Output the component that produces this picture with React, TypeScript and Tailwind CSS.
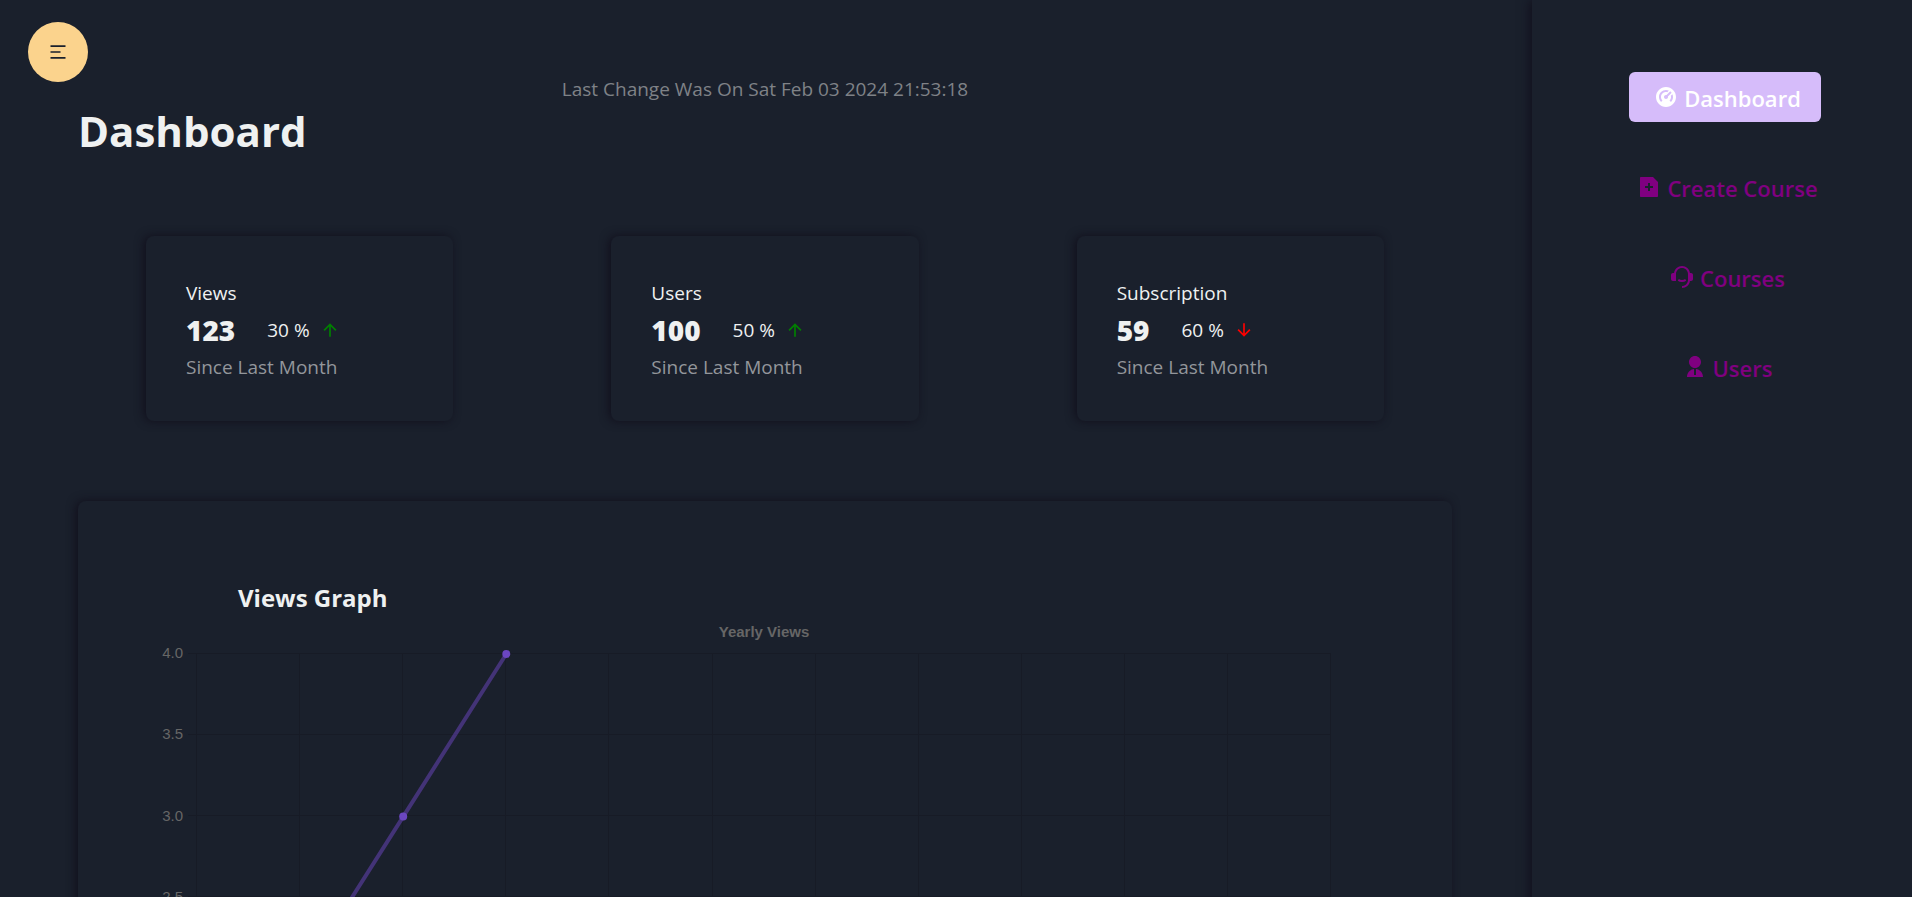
import { RiMenu2Line, RiArrowUpLine, RiArrowDownLine, RiDashboard2Fill, RiFileAddFill, RiCustomerService2Fill, RiUser2Fill } from "react-icons/ri";
import type { IconType } from "react-icons";

type Stat = { title: string; value: number; percent: number; up: boolean };

const stats: Stat[] = [
  { title: "Views", value: 123, percent: 30, up: true },
  { title: "Users", value: 100, percent: 50, up: true },
  { title: "Subscription", value: 59, percent: 60, up: false },
];

const links: { label: string; icon: IconType; active?: boolean }[] = [
  { label: "Dashboard", icon: RiDashboard2Fill, active: true },
  { label: "Create Course", icon: RiFileAddFill },
  { label: "Courses", icon: RiCustomerService2Fill },
  { label: "Users", icon: RiUser2Fill },
];

function StatCard({ title, value, percent, up }: Stat) {
  return (
    <section className="flex-1 rounded-lg px-10 pt-[41px] pb-[38px] shadow-[-2px_0_10px_#110f1c]">
      <p className="text-[19px] leading-8 text-[#eff1f1]">{title}</p>
      <div className="my-[3px] flex h-9 items-center">
        <strong className="text-[28px] leading-9 font-extrabold">{value}</strong>
        <span className="ml-8 text-[19px] leading-9">{percent} %</span>
        {up ? (
          <RiArrowUpLine className="ml-2.5 size-5 text-[#008000]" />
        ) : (
          <RiArrowDownLine className="ml-2.5 size-5 text-[#ff0000]" />
        )}
      </div>
      <p className="text-[19px] leading-8 text-[#93969b]">Since Last Month</p>
    </section>
  );
}

const STEP_X = 103.1;
const STEP_Y = 81.3;
const LEFT = 36;
const TOP = 34;
const COLS = 12;
const ticks = ["4.0", "3.5", "3.0", "2.5", "2.0", "1.5", "1.0", "0.5", "0"];
const views = [1, 2, 3, 4];

function ViewsChart() {
  const right = LEFT + STEP_X * (COLS - 1);
  const bottom = TOP + STEP_Y * (ticks.length - 1);
  const points = views.map((v, i) => [LEFT + i * STEP_X, TOP + (4 - v) * 2 * STEP_Y]);
  return (
    <svg viewBox="0 0 1170 712" className="block w-full" role="img" aria-label="Yearly Views">
      <text x={(LEFT + right) / 2} y="17" textAnchor="middle" fill="#666666" className="text-[15px] font-bold">
        Yearly Views
      </text>
      <g stroke="#171b26" strokeWidth="1">
        {ticks.map((t, i) => (
          <line key={t} x1={LEFT - 9} x2={right} y1={Math.floor(TOP + i * STEP_Y) - 0.5} y2={Math.floor(TOP + i * STEP_Y) - 0.5} />
        ))}
        {Array.from({ length: COLS }, (_, i) => (
          <line key={i} x1={Math.round(LEFT + i * STEP_X) - 0.5} x2={Math.round(LEFT + i * STEP_X) - 0.5} y1={TOP} y2={bottom + 8} />
        ))}
      </g>
      {ticks.map((t, i) => (
        <text key={t} x={LEFT - 14} y={TOP + i * STEP_Y + 4} textAnchor="end" fill="#666666" className="text-[15px]">
          {t}
        </text>
      ))}
      <polyline points={points.map((p) => p.join(",")).join(" ")} fill="none" stroke="#6b46c1" strokeOpacity="0.5" strokeWidth="4" />
      {points.map(([x, y]) => (
        <circle key={x} cx={x} cy={y} r="4" fill="#6b46c1" />
      ))}
    </svg>
  );
}

export default function App() {
  return (
    <div className="grid min-h-screen grid-cols-[minmax(0,1fr)_380px] bg-[#1a202c] font-['Open_Sans','Noto_Sans',sans-serif] text-[#eff1f1]">
      <button
        type="button"
        aria-label="Open menu"
        className="fixed top-[22px] left-7 flex size-[60px] items-center justify-center rounded-full bg-[#fbd38d] text-[#1a202c]"
      >
        <RiMenu2Line className="size-5" />
      </button>

      <main className="pt-[71px] pr-20 pl-[78px]">
        <p className="text-center text-[19px] leading-9 text-[#7f8287]">Last Change Was On Sat Feb 03 2024 21:53:18</p>
        <h1 className="text-[42px] leading-[48px] font-bold">Dashboard</h1>

        <div className="mt-[81px] flex gap-[158px] px-[68px]">
          {stats.map((s) => (
            <StatCard key={s.title} {...s} />
          ))}
        </div>

        <section className="mt-20 rounded-lg pt-[79px] pr-[121px] pb-16 pl-[83px] shadow-[-2px_0_10px_#110f1c]">
          <h2 className="ml-[77px] text-2xl leading-9 font-bold">Views Graph</h2>
          <div className="mt-1 font-['Liberation_Sans',Arial,sans-serif]">
            <ViewsChart />
          </div>
        </section>
      </main>

      <aside className="shadow-[-2px_0_10px_#110f1c]">
        <nav className="flex flex-col items-center gap-10 pt-[72px] pl-1.5">
          {links.map(({ label, icon: Icon, active }) => (
            <a
              key={label}
              href="#"
              className={
                active
                  ? "flex h-[50px] items-center gap-1.5 rounded-md bg-[#d6bcfa] pr-5 pl-[25px] text-[22px] font-semibold text-white"
                  : "flex h-[50px] items-center gap-1.5 pr-5 pl-[25px] text-[22px] font-semibold text-[#800080]"
              }
            >
              <Icon className="size-6" />
              <span className="pt-0.5">{label}</span>
            </a>
          ))}
        </nav>
      </aside>
    </div>
  );
}
